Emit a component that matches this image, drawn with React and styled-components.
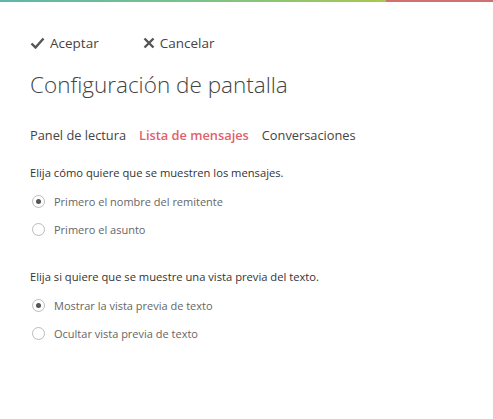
import styled, { createGlobalStyle } from "styled-components";

const GlobalStyle = createGlobalStyle`
  html, body {
    margin: 0;
    background: #fff;
    font-family: "Open Sans", "Noto Sans", sans-serif;
  }
`;

const TopBar = styled.div`
  height: 2px;
  background: linear-gradient(
    to right,
    #5db7aa 0%,
    #79c38a 40%,
    #a9c84c 78%,
    #a9c84c 78.3%,
    #d07070 78.4%,
    #d07070 100%
  );
`;

const Page = styled.div`
  padding: 30px 30px 0 30px;
`;

const Toolbar = styled.div`
  display: flex;
  gap: 44px;
  height: 22px;
  align-items: center;
`;

const ToolButton = styled.button`
  display: flex;
  align-items: center;
  gap: 5px;
  padding: 0;
  border: 0;
  background: none;
  font-family: inherit;
  font-size: 13.5px;
  color: #444;
  cursor: pointer;
`;

const Title = styled.h1`
  margin: 16px 0 0 0;
  font-size: 22.5px;
  font-weight: 300;
  color: #444;
  line-height: 30px;
`;

const Tabs = styled.div`
  display: flex;
  gap: 13px;
  margin-top: 25px;
`;

const Tab = styled.span`
  font-size: 12.8px;
  line-height: 20px;
  color: ${(p) => (p.$active ? "#e0606e" : "#444")};
  font-weight: ${(p) => (p.$active ? 600 : 400)};
`;

const Section = styled.div`
  margin-top: ${(p) => p.$top}px;
`;

const Prompt = styled.p`
  margin: 0;
  font-size: 11.2px;
  line-height: 16px;
  color: #333;
`;

const Option = styled.label`
  display: flex;
  align-items: center;
  gap: 9px;
  margin-top: 12px;
  height: 16px;
  font-size: 11px;
  color: #666;
`;

const Radio = styled.span`
  width: 13px;
  height: 13px;
  box-sizing: border-box;
  border: 1px solid #bbb;
  border-radius: 50%;
  display: flex;
  align-items: center;
  justify-content: center;
  margin-left: 2px;
  &::after {
    content: "";
    width: 5px;
    height: 5px;
    border-radius: 50%;
    background: ${(p) => (p.$checked ? "#555" : "transparent")};
  }
`;

const groups = [
  {
    prompt: "Elija cómo quiere que se muestren los mensajes.",
    options: ["Primero el nombre del remitente", "Primero el asunto"],
    top: 20,
  },
  {
    prompt: "Elija si quiere que se muestre una vista previa del texto.",
    options: ["Mostrar la vista previa de texto", "Ocultar vista previa de texto"],
    top: 32,
  },
];

export default function App() {
  return (
    <>
      <GlobalStyle />
      <TopBar />
      <Page>
        <Toolbar>
          <ToolButton>
            <svg width="15" height="12" viewBox="0 0 15 12">
              <path d="M1.5 6.5 L5.5 10.5 L13.5 1.5" fill="none" stroke="#555" strokeWidth="2.4" />
            </svg>
            Aceptar
          </ToolButton>
          <ToolButton>
            <svg width="12" height="12" viewBox="0 0 12 12">
              <path d="M1.5 1.5 L10.5 10.5 M10.5 1.5 L1.5 10.5" fill="none" stroke="#555" strokeWidth="2.4" />
            </svg>
            Cancelar
          </ToolButton>
        </Toolbar>
        <Title>Configuración de pantalla</Title>
        <Tabs>
          <Tab>Panel de lectura</Tab>
          <Tab $active>Lista de mensajes</Tab>
          <Tab>Conversaciones</Tab>
        </Tabs>
        {groups.map((g) => (
          <Section key={g.prompt} $top={g.top}>
            <Prompt>{g.prompt}</Prompt>
            {g.options.map((o, i) => (
              <Option key={o}>
                <Radio $checked={i === 0} />
                {o}
              </Option>
            ))}
          </Section>
        ))}
      </Page>
    </>
  );
}
